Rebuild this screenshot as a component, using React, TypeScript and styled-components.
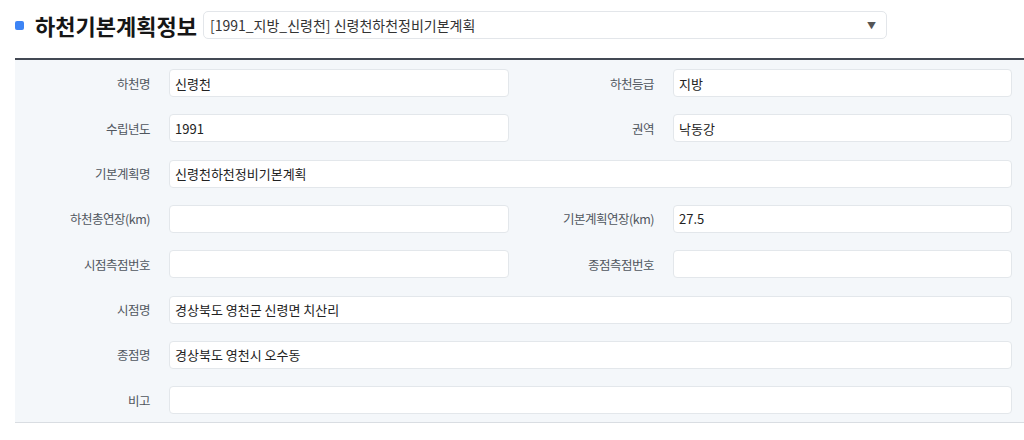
import React from "react";
import styled, { createGlobalStyle } from "styled-components";

const GlobalStyle = createGlobalStyle`
  html, body { margin: 0; padding: 0; background: #ffffff; }
  body { font-family: "Noto Sans CJK KR", "Noto Sans", sans-serif; color: #222; }
  * { box-sizing: border-box; }
`;

const Page = styled.div`
  width: 1024px;
  height: 440px;
  background: #ffffff;
  overflow: hidden;
`;

const Header = styled.div`
  display: flex;
  align-items: center;
  height: 50px;
  padding-left: 15px;
  margin-bottom: 8px;
`;

const Bullet = styled.span`
  width: 9px;
  height: 9px;
  border-radius: 2px;
  background: #3d84f5;
  margin-right: 11px;
  flex: none;
`;

const Title = styled.h2`
  margin: 0 6px 0 0;
  font-size: 22px;
  font-weight: 700;
  color: #161616;
  letter-spacing: 0;
  white-space: nowrap;
`;

const SelectBox = styled.div`
  width: 684px;
  height: 28px;
  border: 1px solid #e3e6ea;
  border-radius: 5px;
  background: #fff;
  display: flex;
  align-items: center;
  justify-content: space-between;
  padding: 0 10px 0 6px;
  font-size: 14px;
  color: #333;
`;

const Arrow = styled.span`
  font-size: 9px;
  color: #555;
`;

const Panel = styled.div`
  margin-left: 15px;
  border-top: 2px solid #434954;
  border-bottom: 1px solid #d9dde2;
  background: #f4f7fa;
  padding: 9px 12px 8px 0;
  display: grid;
  grid-template-columns: 154px 340px 164px 339px;
  grid-auto-rows: 28px;
  row-gap: 17.33px;
`;

const Label = styled.div`
  display: flex;
  align-items: center;
  justify-content: flex-end;
  padding-right: 19px;
  font-size: 12.5px;
  color: #50565e;
  letter-spacing: -0.5px;
  white-space: nowrap;
`;

const Field = styled.div<{ $wide?: boolean }>`
  grid-column: ${(p) => (p.$wide ? "span 3" : "span 1")};
  height: 28px;
  border: 1px solid #e3e7eb;
  border-radius: 4px;
  background: #fff;
  display: flex;
  align-items: center;
  padding: 0 5px;
  font-size: 13px;
  color: #222;
`;

type Item = { label: string; value: string; wide?: boolean };

const rows: Item[][] = [
  [
    { label: "하천명", value: "신령천" },
    { label: "하천등급", value: "지방" },
  ],
  [
    { label: "수립년도", value: "1991" },
    { label: "권역", value: "낙동강" },
  ],
  [{ label: "기본계획명", value: "신령천하천정비기본계획", wide: true }],
  [
    { label: "하천총연장(km)", value: "" },
    { label: "기본계획연장(km)", value: "27.5" },
  ],
  [
    { label: "시점측점번호", value: "" },
    { label: "종점측점번호", value: "" },
  ],
  [{ label: "시점명", value: "경상북도 영천군 신령면 치산리", wide: true }],
  [{ label: "종점명", value: "경상북도 영천시 오수동", wide: true }],
  [{ label: "비고", value: "", wide: true }],
];

export default function App() {
  return (
    <Page>
      <GlobalStyle />
      <Header>
        <Bullet />
        <Title>하천기본계획정보</Title>
        <SelectBox>
          <span>[1991_지방_신령천] 신령천하천정비기본계획</span>
          <Arrow>▼</Arrow>
        </SelectBox>
      </Header>
      <Panel>
        {rows.flat().map((it, i) => (
          <React.Fragment key={i}>
            <Label>{it.label}</Label>
            <Field $wide={it.wide}>{it.value}</Field>
          </React.Fragment>
        ))}
      </Panel>
    </Page>
  );
}
